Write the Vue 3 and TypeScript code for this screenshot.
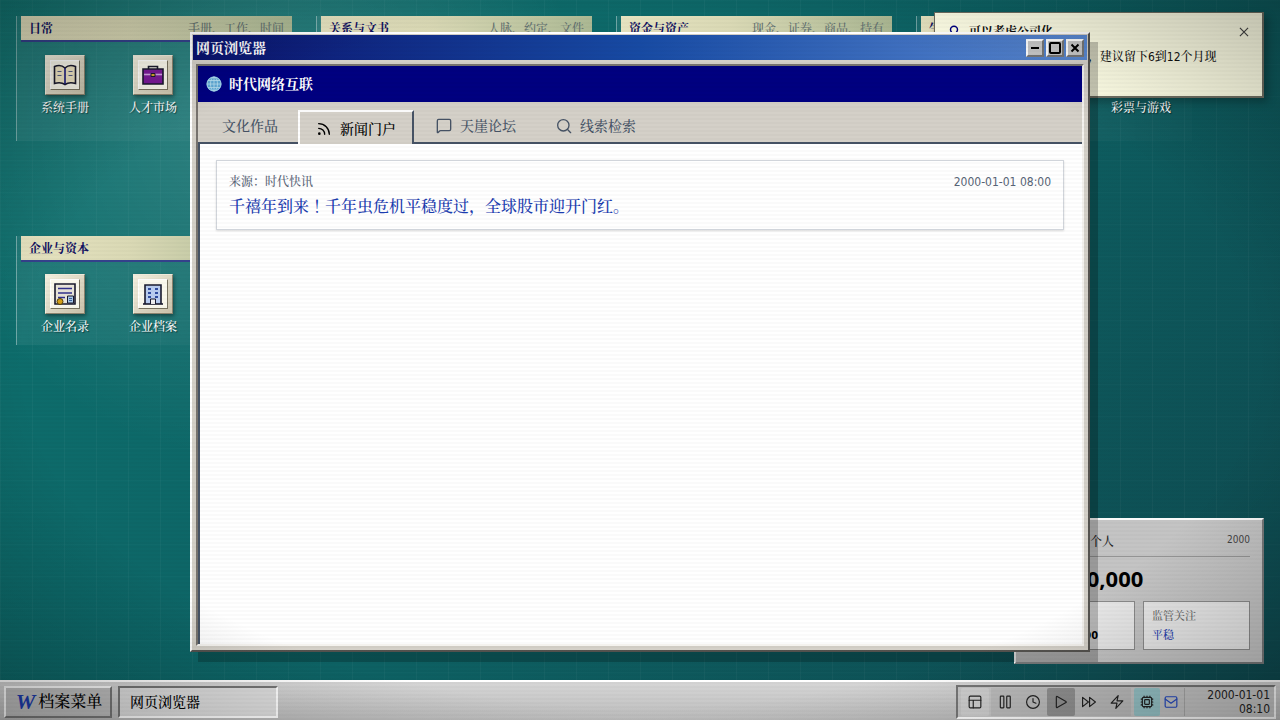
<script setup lang="ts">
import { ref } from 'vue'

interface DesktopApp { label: string; icon: string }
interface Group { title: string; hint: string; apps: DesktopApp[]; short?: boolean }

const groups: Group[] = [
  { title: '日常', hint: '手册、工作、时间', apps: [{ label: '系统手册', icon: 'book' }, { label: '人才市场', icon: 'case' }] },
  { title: '关系与文书', hint: '人脉、约定、文件', apps: [] },
  { title: '资金与资产', hint: '现金、证券、商品、持有', apps: [] },
  { title: '生活', hint: '', apps: [{ label: '', icon: '' }, { label: '', icon: '' }, { label: '彩票与游戏', icon: 'ticket' }] },
  { title: '企业与资本', hint: '', apps: [{ label: '企业名录', icon: 'list' }, { label: '企业档案', icon: 'building' }], short: true },
]

const tabs = [
  { label: '文化作品', icon: '' },
  { label: '新闻门户', icon: 'rss' },
  { label: '天崖论坛', icon: 'chat' },
  { label: '线索检索', icon: 'search' },
]
const active = ref(1)
</script>

<template>
  <div class="desktop">
    <main class="groups">
      <section v-for="g in groups" :key="g.title" class="group" :class="{ short: g.short }">
        <header class="group-head"><h2>{{ g.title }}</h2><span>{{ g.hint }}</span></header>
        <div class="apps">
          <template v-for="(a, i) in g.apps" :key="i">
            <button v-if="a.label" class="app">
              <span class="tile">
                <span class="tile-face">
                  <svg v-if="a.icon === 'book'" width="24" height="24" viewBox="0 0 24 24"><path d="M1.500 3.500C5 2 9 2 12 5c3-3 7-3 10.500-1.500v17C19 19.500 15 19.500 12 21.500c-3-2-7-2-10.500-1z" fill="#f0e6c4" stroke="#1a1a2e" stroke-width="1.600" /><path d="M12 5v16" stroke="#1a1a7e" stroke-width="1.600" /><path d="M4.500 8.500h4M4.500 12.500h4M15.500 8.500h4M15.500 12.500h4" stroke="#596188" /></svg>
                  <svg v-else-if="a.icon === 'case'" width="24" height="24" viewBox="0 0 24 24"><path d="M7.500 6V3.500h9V6" fill="none" stroke="#1a1a2e" stroke-width="1.600" /><path d="M2 6h20v15H2z" fill="#7a1a98" stroke="#1a1a2e" stroke-width="1.600" /><path d="M3 11.500h18" stroke="#d3a5e4" stroke-width="1.600" /><path d="M10 10.500h4v3h-4z" fill="#d8a52b" stroke="#1a1a2e" /></svg>
                  <svg v-else-if="a.icon === 'list'" width="24" height="24" viewBox="0 0 24 24"><path d="M2 2h20v20H2z" fill="#e9e5da" stroke="#1a1a2e" stroke-width="1.600" /><path d="M5 6.500h14M5 11h14M5 15.500h7" stroke="#30308b" stroke-width="1.300" /><path d="M14.500 14h6v7h-6z" fill="#a9c8e8" stroke="#1a1a2e" /><path d="M16 16.500h3M16 18.500h3" stroke="#3b6299" /><circle cx="7" cy="19.500" r="3" fill="#d5a018" stroke="#53400a" /></svg>
                  <svg v-else-if="a.icon === 'building'" width="24" height="24" viewBox="0 0 24 24"><path d="M4 22V3h16v19" fill="#b9cdf0" stroke="#1a1a2e" stroke-width="1.600" /><path d="M2 22h20" stroke="#1a1a2e" stroke-width="1.600" /><path d="M7 7h3M14 7h3M7 11h3M14 11h3M7 15h3M14 15h3" stroke="#304c9e" stroke-width="2" /><path d="M9.500 22v-5h5v5" fill="#eee" stroke="#1a1a2e" /></svg>
                </span>
              </span>
              <span>{{ a.label }}</span>
            </button>
            <span v-else class="app"></span>
          </template>
        </div>
      </section>
    </main>

    <aside class="notice">
      <header>
        <svg width="14" height="14" viewBox="0 0 24 24" fill="none" stroke="#000080" stroke-width="2.500"><path d="M9 18h6M10 22h4M15 14c1-2 3-3 3-6a6 6 0 0 0-12 0c0 3 2 4 3 6z" /></svg>
        <strong>可以考虑公司化</strong>
        <button aria-label="关闭提醒"><svg width="14" height="14" viewBox="0 0 24 24" fill="none" stroke="currentColor" stroke-width="2"><path d="M5 5l14 14M19 5L5 19" /></svg></button>
      </header>
      <p>，建议留下6到12个月现</p>
    </aside>

    <aside class="status">
      <header><span class="who">个人</span><span class="year">2000</span></header>
      <div class="money">¥100,000</div>
      <div class="cells">
        <div class="cell"><span>现金</span><b>100,000</b></div>
        <div class="cell"><span>监管关注</span><em>平稳</em></div>
      </div>
    </aside>

    <section class="window">
      <header class="titlebar">
        <h1>网页浏览器</h1>
        <div class="controls">
          <button aria-label="最小化"><svg width="14" height="14" viewBox="0 0 14 14"><path d="M3 7h8" /></svg></button>
          <button aria-label="最大化"><svg width="14" height="14" viewBox="0 0 14 14"><rect x="2" y="2" width="10" height="10" rx="1" /></svg></button>
          <button aria-label="关闭"><svg width="14" height="14" viewBox="0 0 14 14"><path d="M3.500 3.500l7 7M10.500 3.500l-7 7" /></svg></button>
        </div>
      </header>
      <div class="browser">
        <div class="brand">
          <svg width="16" height="16" viewBox="0 0 16 16" fill="none"><circle cx="8" cy="8" r="7.500" fill="#5fa9d6" /><g stroke="#b9e0f0" stroke-width=".8"><circle cx="8" cy="8" r="7" /><ellipse cx="8" cy="8" rx="3.500" ry="7" /><path d="M8 1v14M1 8h14M2 4.500h12M2 11.500h12" /></g></svg>
          <strong>时代网络互联</strong>
        </div>
        <nav class="tabs" role="tablist">
          <button v-for="(t, i) in tabs" :key="t.label" role="tab" :aria-selected="active === i" :class="{ on: active === i }" @click="active = i">
            <svg v-if="t.icon" width="16" height="16" viewBox="0 0 24 24" fill="none" stroke="currentColor" stroke-width="2" stroke-linecap="round" stroke-linejoin="round">
              <template v-if="t.icon === 'rss'"><path d="M4 11a9 9 0 0 1 9 9M4 4a16 16 0 0 1 16 16" /><circle cx="5" cy="19" r="1" /></template>
              <path v-else-if="t.icon === 'chat'" d="M22 17a2 2 0 0 1-2 2H6.800a2 2 0 0 0-1.400.600l-2.200 2.200A.7.7 0 0 1 2 21.300V4a2 2 0 0 1 2-2h16a2 2 0 0 1 2 2z" />
              <template v-else><circle cx="11" cy="11" r="8.500" /><path d="M22 22l-5-5" /></template>
            </svg>
            {{ t.label }}
          </button>
        </nav>
        <div class="page">
          <article class="news">
            <div class="meta"><span>来源：时代快讯</span><time>2000-01-01 08:00</time></div>
            <a href="#">千禧年到来<span class="mark">！</span>千年虫危机平稳度过，全球股市迎开门红。</a>
          </article>
        </div>
      </div>
    </section>

    <footer class="taskbar">
      <button class="menu"><i>W</i>档案菜单</button>
      <button class="task">网页浏览器</button>
      <div class="tray">
        <button class="tool light" aria-label="布局"><svg viewBox="0 0 24 24"><rect x="2" y="2" width="20" height="20" rx="2" /><path d="M2 9h20M9 9v13" /></svg></button>
        <div class="speeds">
          <button class="tool" aria-label="暂停"><svg viewBox="0 0 24 24"><rect x="4" y="2" width="6" height="20" rx="1" /><rect x="15" y="2" width="6" height="20" rx="1" /></svg></button>
          <button class="tool" aria-label="正常"><svg viewBox="0 0 24 24"><circle cx="12" cy="12" r="11" /><path d="M12 6v6l5 2" /></svg></button>
          <button class="tool pressed" aria-label="播放"><svg viewBox="0 0 24 24"><path d="M4 3.500a1 1 0 0 1 1.500-.9l15 8.500a1 1 0 0 1 0 1.800l-15 8.500A1 1 0 0 1 4 20.500z" /></svg></button>
          <button class="tool" aria-label="快进"><svg viewBox="0 0 24 24"><path d="M1 4l10 8-10 8zM13 4l10 8-10 8z" /></svg></button>
          <button class="tool" aria-label="极速"><svg viewBox="0 0 24 24"><path d="M14 1L2 14h10l-2 9 12-13h-10z" /></svg></button>
        </div>
        <button class="tool chip" aria-label="系统"><svg viewBox="0 0 24 24"><rect x="4" y="4" width="16" height="16" rx="2" /><rect x="8" y="8" width="8" height="8" rx="1" /><path d="M7 2v2M12 2v2M17 2v2M7 20v2M12 20v2M17 20v2M2 7h2M2 12h2M2 17h2M20 7h2M20 12h2M20 17h2" /></svg></button>
        <button class="tool mail" aria-label="邮件"><svg viewBox="0 0 24 24"><rect x="2" y="3" width="20" height="18" rx="2" /><path d="M2 7l10 7 10-7" /></svg></button>
        <time class="clock">2000-01-01<br>08:10</time>
      </div>
    </footer>
    <div class="screen"></div>
  </div>
</template>

<style>
body { margin: 0; }
</style>
<style scoped>
* { box-sizing: border-box; }
h1, h2, p { margin: 0; font-size: inherit; }
button { font: inherit; color: inherit; padding: 0; margin: 0; border: 0; background: none; }
svg { display: block; flex: none; }
.desktop {
  position: relative; height: 100vh; overflow: hidden; display: flex; flex-direction: column;
  font: 500 12px/16px Tahoma, "DejaVu Sans Condensed", "Songti SC", "Noto Serif CJK SC", "Noto Sans CJK SC", sans-serif;
  background: linear-gradient(90deg, rgba(255,255,255,.03) 1px, transparent 1px) 0 0 / 32px 32px, linear-gradient(rgba(255,255,255,.01) 1px, transparent 1px) 0 0 / 32px 32px, radial-gradient(circle at 20% 18%, rgba(255,255,255,.15) 0, transparent 28%), linear-gradient(135deg, #0d7370, #0d6264 50%, #0e484e);
}
.groups { flex: 1; min-height: 0; padding: 16px; display: grid; grid-template-columns: repeat(5, 276px); grid-template-rows: 125px 109px; gap: 95px 24px; overflow: hidden; }
.group { border-left: 1px solid rgba(255,255,255,.4); padding-left: 4px; background: linear-gradient(90deg, rgba(255,255,255,.06), rgba(255,255,255,.01)); }
.group.short { grid-column: 1; grid-row: 2; }
.group-head { height: 26px; padding: 2px 8px 0; display: flex; justify-content: space-between; align-items: center; background: linear-gradient(90deg, #e6e3c0, #dad9b5 40%, #abb893); border-bottom: 2px solid #34418b; color: #62706f; }
.group-head h2 { color: #101060; font-size: 12px; font-weight: 700; }
.apps { display: flex; padding-top: 13px; }
.short .apps { padding-top: 12px; }
.app { width: 88px; display: flex; flex-direction: column; align-items: center; gap: 5px; color: #fff; text-shadow: 1px 1px 1px #00000080; font-size: 12px; flex: none; }
.tile { width: 40px; height: 40px; padding: 4px; background: linear-gradient(135deg, #f2efdf, #cbc3ac); border: 1px solid; border-color: #f2efdf #8b836e #8b836e #f2efdf; box-shadow: 1px 2px 4px #0006; }
.tile-face { display: flex; align-items: center; justify-content: center; height: 100%; background: #faf8ec; border: 1px solid; border-color: #fff #77715e #77715e #fff; }
.notice { position: absolute; right: 16px; top: 12px; width: 330px; height: 86px; padding: 11px 11px 10px 12px; background: #ffffe6; border: 1px solid #6d6d61; border-right-width: 2px; border-bottom-width: 2px; box-shadow: 4px 4px 8px #0004; color: #111; }
.notice header { display: flex; align-items: center; gap: 8px; height: 16px; color: #111; }
.notice header button { margin-left: auto; color: #444; }
.notice p { margin-top: 9px; padding-left: 141px; white-space: nowrap; }
.status { position: absolute; right: 16px; bottom: 56px; width: 250px; height: 146px; padding: 10px 12px; background: #c4c4c4; border: 2px solid; border-color: #fff #77797a #77797a #fff; }
.status header { display: flex; justify-content: space-between; height: 27px; border-bottom: 1px solid #949494; color: #222; }
.who { padding: 4px 0 0 62px; font-size: 12px; }
.year { font-size: 10px; line-height: 20px; color: #444; }
.money { font: 700 22px/28px "Noto Sans", sans-serif; margin-top: 7px; padding-left: 21px; color: #000; }
.cells { display: grid; grid-template-columns: 1fr 1fr; gap: 8px; margin-top: 9px; }
.cell { height: 49px; padding: 7px 8px; border: 1px solid #8a8a8a; background: #e8e8e8; display: flex; flex-direction: column; gap: 3px; color: #666; font-size: 11px; line-height: 16px; }
.cell b { color: #000; padding-left: 16px; }
.cell em { font-style: normal; color: #1c3cae; }
.window { position: absolute; left: 190px; top: 32px; width: 900px; height: 620px; padding: 2px; background: #d4d0c8; border: 2px solid; border-color: #fff #55534f #55534f #fff; box-shadow: 8px 10px 0 rgba(0,0,0,.22); display: flex; flex-direction: column; }
.titlebar { margin: -1px -1px 0; flex: none; height: 25px; display: flex; align-items: center; justify-content: space-between; padding: 0 3px; background: linear-gradient(90deg, #0a126e, #174aa3 50%, #5988d2); color: #fff; }
.titlebar h1 { font-size: 14px; font-weight: 700; }
.controls { display: flex; gap: 2px; }
.controls button { width: 18px; height: 18px; display: grid; place-items: center; background: #c8c8c8; border: 2px solid; border-color: #fff #777 #777 #fff; }
.controls path, .controls rect { fill: none; stroke: #000; stroke-width: 2; }
.browser { flex: 1; margin: 4px 2px 2px; border: 2px solid; border-color: #77736e #f4f2ee #f4f2ee #77736e; display: flex; flex-direction: column; background: #d4d0c8; }
.brand { height: 36px; flex: none; background: #000080; display: flex; align-items: center; padding: 0 8px; gap: 7px; color: #fff; font-size: 14px; }
.tabs { flex: none; height: 42px; display: flex; padding: 8px 4px 0; border-bottom: 2px solid #465365; color: #465365; font-size: 14px; }
.tabs button { display: flex; align-items: center; gap: 8px; padding: 0 20px; height: 32px; border: 0 solid; }
.tabs button.on { height: 34px; padding: 2px 16px 0; margin-right: 2px; border-width: 2px 2px 0; border-color: #fff #465365 transparent #fff; background: #d4d0c8; color: #000; }
.page { flex: 1; border-left: 2px solid #465365; background: #fff; padding: 16px 18px 16px 16px; }
.news { border: 1px solid #d1d5db; box-shadow: 0 1px 2px #0002; padding: 13px 12px 10px; }
.meta { display: flex; justify-content: space-between; color: #586476; font-size: 12px; line-height: 16px; }
.news a { display: block; margin-top: 4px; color: #1b3caf; font-size: 16px; line-height: 24px; text-decoration: none; }
.mark { font-family: "Noto Serif CJK TC", "Noto Sans CJK TC", serif; }
.taskbar { flex: none; height: 40px; display: flex; align-items: center; gap: 6px; padding: 2px 4px 0; background: linear-gradient(#d6d6d6, #bcbcbc); border-top: 2px solid #fff; z-index: 1; }
.menu { width: 108px; height: 32px; display: flex; align-items: center; justify-content: center; gap: 3px; padding-left: 2px; background: #bfbfbf; border: 2px solid; border-color: #fff #777 #777 #fff; font-size: 16px; }
.menu i { font: italic 700 22px/24px "Liberation Serif", serif; color: #1c3cae; }
.task { width: 160px; height: 32px; padding: 0 10px; text-align: left; border: 2px solid; border-color: #777 #fff #fff #777; background: #dedede; font-size: 14px; }
.tray { margin-left: auto; height: 34px; width: 320px; display: flex; align-items: center; padding: 0 4px 0 3px; border: 2px solid; border-color: #777 #fff #fff #777; background: #c7c7c7; color: #222; }
.tool { width: 28px; height: 28px; display: grid; place-items: center; border-radius: 2px; }
.tool svg { width: 14px; height: 14px; fill: none; stroke: currentColor; stroke-width: 2; stroke-linejoin: round; stroke-linecap: round; }
.light { background: #d0d0d0; }
.speeds { display: flex; margin: 0 3px 0 2px; background: #bdbdbd; }
.pressed { background: #929292; }
.chip { background: #98c5c9; width: 26px; }
.mail { width: 22px; color: #2448c0; }
.clock { flex: 1; border-left: 1px solid #aaa; height: 28px; line-height: 14px; text-align: right; margin-left: 2px; }
.screen { position: absolute; inset: 0; z-index: 2; pointer-events: none; background: repeating-linear-gradient(rgba(0,0,0,0) 0 2px, rgba(0,0,0,.018) 2px 4px), radial-gradient(ellipse at center, transparent 68%, rgba(0,0,0,.26) 100%); }
</style>
